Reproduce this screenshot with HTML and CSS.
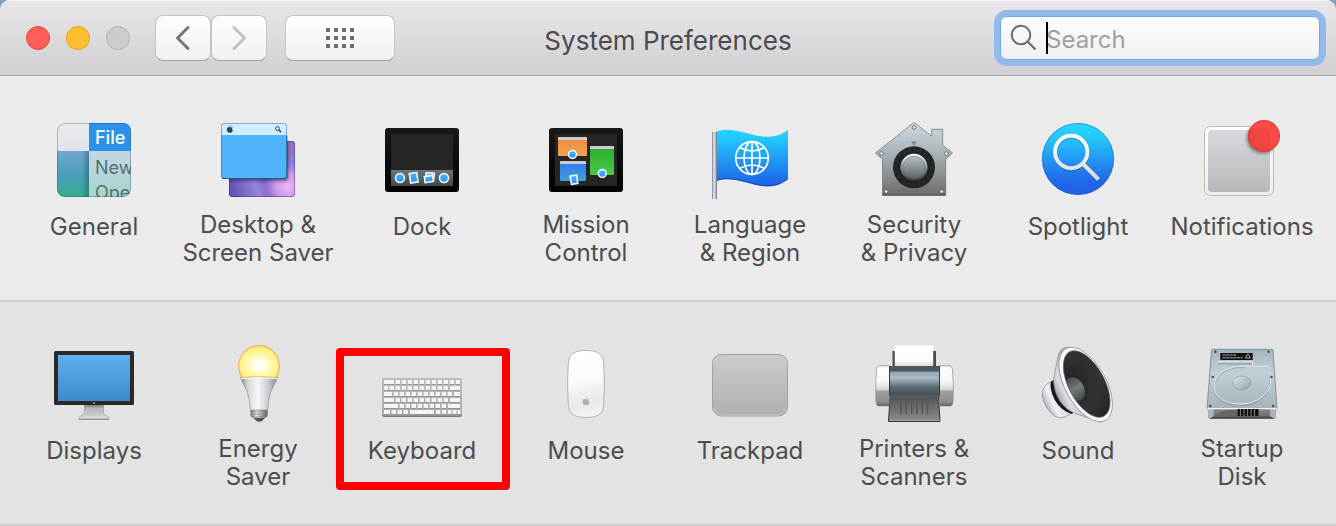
FILE: index.html
```html
<!DOCTYPE html>
<html lang="en">
<head>
<meta charset="utf-8">
<meta name="viewport" content="width=device-width, initial-scale=1">
<title>System Preferences</title>
<link rel="stylesheet" href="styles.css">
</head>
<body>
<div class="window">
  <header class="toolbar">
    <div class="toolbar-start">
      <div class="lights">
        <button class="light light-close" type="button" aria-label="Close"></button>
        <button class="light light-minimize" type="button" aria-label="Minimize"></button>
        <button class="light light-zoom" type="button" aria-label="Zoom" disabled></button>
      </div>
      <nav class="history" aria-label="History">
        <button class="tool" type="button" aria-label="Back">
          <svg width="16" height="26" viewBox="0 0 16 26" fill="none" stroke="#767676" stroke-width="3" stroke-linecap="round" stroke-linejoin="round"><path d="M13 2.500L2.500 13L13 23.500"/></svg>
        </button>
        <button class="tool" type="button" aria-label="Forward" disabled>
          <svg width="16" height="26" viewBox="0 0 16 26" fill="none" stroke="#c0c0c0" stroke-width="3" stroke-linecap="round" stroke-linejoin="round"><path d="M3 2.500L13.500 13L3 23.500"/></svg>
        </button>
      </nav>
      <button class="tool tool-wide" type="button" aria-label="Show All">
        <svg width="28" height="20" viewBox="0 0 28 20" stroke="#6e6e6e" stroke-width="4" stroke-dasharray="4 4"><path d="M0 2h28M0 10h28M0 18h28"/></svg>
      </button>
    </div>
    <h1 class="title">System Preferences</h1>
    <div class="toolbar-end">
      <div class="search">
        <svg class="search-icon" width="28" height="28" viewBox="0 0 28 28" fill="none" stroke="#6c6c6c" stroke-width="2"><circle cx="11" cy="11" r="9.300"/><path d="M17.500 17.500L25.500 25.500" stroke-width="2.300"/></svg>
        <input class="search-input" type="search" placeholder="Search" aria-label="Search">
        <span class="caret"></span>
      </div>
    </div>
  </header>

  <main>
    <section class="panes panes-personal" aria-label="Personal">
      <a class="pane" href="#general">
        <svg class="icon" viewBox="0 0 80 80" aria-hidden="true">
          <defs>
            <clipPath id="gen-clip"><rect x="3" y="3" width="74" height="74" rx="8"/></clipPath>
            <linearGradient id="gen-side" x2="0" y2="1"><stop stop-color="#74a7d0"/><stop offset=".5" stop-color="#4c9eb9"/><stop offset="1" stop-color="#34ac8d"/></linearGradient>
            <linearGradient id="gen-menu" x2="0" y2="1"><stop stop-color="#c4d5e6"/><stop offset="1" stop-color="#a5d5c8"/></linearGradient>
            <linearGradient id="gen-top" x2="0" y2="1"><stop stop-color="#ebebeb"/><stop offset="1" stop-color="#dfe3e8"/></linearGradient>
            <linearGradient id="gen-shade"><stop stop-color="#1b4d60" stop-opacity="0"/><stop offset="1" stop-color="#1b4d60" stop-opacity=".45"/></linearGradient>
          </defs>
          <g clip-path="url(#gen-clip)">
            <rect x="3" y="3" width="32" height="28" fill="url(#gen-top)"/>
            <rect x="3" y="31" width="32" height="46" fill="url(#gen-side)"/>
            <rect x="28" y="31" width="7" height="46" fill="url(#gen-shade)"/>
            <rect x="35" y="31" width="42" height="46" fill="url(#gen-menu)"/>
            <rect x="35" y="3" width="42" height="28" fill="#2b92ea"/>
            <text class="icon-text icon-text-bold" x="41" y="24" fill="#fff">File</text>
            <text class="icon-text" x="41" y="54" fill="#55706f">New</text>
            <text class="icon-text" x="41" y="79" fill="#55706f">Ope</text>
          </g>
          <rect x="3.500" y="3.500" width="73" height="73" rx="7.500" fill="none" stroke="#244b55" stroke-opacity=".32"/>
        </svg>
        <span class="label label-single">General</span>
      </a>

      <a class="pane" href="#desktop">
        <svg class="icon" viewBox="0 0 80 80" aria-hidden="true">
          <defs>
            <linearGradient id="desk-back" x1="0" y1=".7" x2="1" y2=".4"><stop stop-color="#6b51b5"/><stop offset=".35" stop-color="#8f88d8"/><stop offset=".5" stop-color="#8963cb"/><stop offset="1" stop-color="#8f7fdc"/></linearGradient>
            <radialGradient id="desk-glow"><stop stop-color="#f0b5f4"/><stop offset=".5" stop-color="#dda5ee" stop-opacity=".8"/><stop offset="1" stop-color="#a98be8" stop-opacity="0"/></radialGradient>
            <clipPath id="desk-clip"><rect x="11" y="21" width="66" height="56" rx="3"/></clipPath>
            <filter id="soft" x="-20%" y="-20%" width="140%" height="140%"><feGaussianBlur stdDeviation="1.500"/></filter>
          </defs>
          <g clip-path="url(#desk-clip)">
            <rect x="11" y="21" width="66" height="56" fill="url(#desk-back)"/>
            <circle cx="70" cy="66" r="25" fill="url(#desk-glow)"/>
            <path d="M69 21v20l8-9V21z" fill="#9a72b4" filter="url(#soft)"/>
            <rect x="5" y="6" width="65" height="55" rx="3" fill="#2c1c66" opacity=".6" filter="url(#soft)"/>
          </g>
          <rect x="11.500" y="21.500" width="65" height="55" rx="3" fill="none" stroke="#3e2870" stroke-opacity=".45"/>
          <rect x="3" y="3" width="66" height="56" rx="3" fill="#50b4fb"/>
          <path d="M3 15V6q0-3 3-3h60q3 0 3 3v9z" fill="#d2edfe"/>
          <rect x="3.500" y="3.500" width="65" height="55" rx="3" fill="none" stroke="#205d8e" stroke-opacity=".45"/>
          <path d="M4 58.500h63q2 0 2-2V16" fill="none" stroke="#173f68" stroke-opacity=".65"/>
          <path d="M13.300 7.600q-2.500-1.300-4.300.3-1 2.200.8 4.300 1 .8 2.100.2 1.200.7 2.200-.3l.9-1.600q-2-1.300-.1-2.700-.7-.8-1.600-.2zM11.200 6.900q.1-1.500 1.600-1.900 0 1.500-1.600 1.900z" fill="#28445c"/>
          <circle cx="59.500" cy="8.500" r="1.900" fill="none" stroke="#28445c"/><path d="M60.900 10l2.200 2.200" stroke="#28445c" stroke-width="1.400"/>
        </svg>
        <span class="label">Desktop &amp;<br>Screen Saver</span>
      </a>

      <a class="pane" href="#dock">
        <svg class="icon" viewBox="0 0 80 80" aria-hidden="true">
          <defs>
            <linearGradient id="frame" x2="0" y2="1"><stop stop-color="#191919"/><stop offset="1" stop-color="#000"/></linearGradient>
            <linearGradient id="dock-bar" x2="0" y2="1"><stop stop-color="#6c7577"/><stop offset="1" stop-color="#434747"/></linearGradient>
            <linearGradient id="dot" x2="0" y2="1"><stop stop-color="#4cb5fb"/><stop offset="1" stop-color="#2593f4"/></linearGradient>
          </defs>
          <rect x="3" y="8" width="74" height="64" rx="3" fill="url(#frame)"/>
          <rect x="9" y="14" width="62" height="52" fill="#252525"/>
          <rect x="9" y="50" width="62" height="16" fill="url(#dock-bar)"/>
          <g fill="url(#dot)" stroke="#fff" stroke-width="1.500">
            <circle cx="18" cy="58" r="4.500"/>
            <rect x="28" y="53" width="7.500" height="9.500" transform="rotate(-9 32 58)"/>
            <rect x="44" y="53" width="8" height="6" transform="rotate(4 48 56)"/>
            <rect x="42.500" y="56" width="8.500" height="6" transform="rotate(-8 47 58)"/>
            <circle cx="62" cy="58" r="4.500"/>
          </g>
        </svg>
        <span class="label label-single">Dock</span>
      </a>

      <a class="pane" href="#mission-control">
        <svg class="icon" viewBox="0 0 80 80" aria-hidden="true">
          <defs>
            <linearGradient id="mc-orange" x2="0" y2="1"><stop stop-color="#ec8843"/><stop offset="1" stop-color="#f2a34f"/></linearGradient>
            <linearGradient id="mc-green" x2="0" y2="1"><stop stop-color="#28ad2c"/><stop offset="1" stop-color="#47c848"/></linearGradient>
            <linearGradient id="mc-blue" x2="0" y2="1"><stop stop-color="#3179ed"/><stop offset="1" stop-color="#3ca2dc"/></linearGradient>
          </defs>
          <rect x="3" y="8" width="74" height="64" rx="3" fill="url(#frame)"/>
          <rect x="9" y="14" width="62" height="52" fill="#252525"/>
          <rect x="12" y="17" width="29" height="19" rx="1" fill="url(#mc-orange)"/>
          <rect x="44" y="26" width="24" height="29" rx="1" fill="url(#mc-green)"/>
          <rect x="14" y="41" width="26" height="20" rx="1" fill="url(#mc-blue)"/>
          <path d="M12 20v-2q0-1 1-1h27q1 0 1 1v2zM44 29v-2q0-1 1-1h22q1 0 1 1v2zM14 44v-2q0-1 1-1h24q1 0 1 1v2z" fill="#ccc"/>
          <g fill="url(#dot)" stroke="#fff" stroke-width="1.500">
            <circle cx="26.500" cy="34.500" r="4"/>
            <circle cx="56.300" cy="53.500" r="4"/>
            <rect x="24.800" y="55.500" width="6.500" height="8.500" transform="rotate(-9 28 60)"/>
          </g>
        </svg>
        <span class="label">Mission<br>Control</span>
      </a>

      <a class="pane" href="#language">
        <svg class="icon" viewBox="0 0 80 80" aria-hidden="true">
          <defs>
            <linearGradient id="flag" x2="0" y2="1"><stop stop-color="#29d6fe"/><stop offset=".25" stop-color="#21bdfa"/><stop offset="1" stop-color="#1d5fe9"/></linearGradient>
            <linearGradient id="pole"><stop stop-color="#777b96"/><stop offset=".4" stop-color="#e9ebf3"/><stop offset=".7" stop-color="#b1b4c4"/><stop offset="1" stop-color="#6f7387"/></linearGradient>
          </defs>
          <path d="M6 11.500C25 5 44 19 62 16.500C70 15.500 73 13 78 10V59C73 62 70 65 62 66C44 68.500 25 54 6 61z" fill="url(#flag)"/>
          <path d="M6 60.700C25 53.700 44 68 62 65.500C70 64.500 73 62 78 59" fill="none" stroke="#1546a8"/>
          <rect x="2" y="12" width="5" height="67" fill="url(#pole)"/>
          <g fill="none" stroke="#fff" stroke-width="1.700">
            <circle cx="42" cy="38" r="16.300"/><ellipse cx="42" cy="38" rx="8" ry="16.300"/>
            <path d="M42 21.700v32.600M25.700 38h32.600M29.500 27.500Q42 34.500 54.500 27.500M29.500 48.500Q42 41.500 54.500 48.500"/>
          </g>
        </svg>
        <span class="label">Language<br>&amp; Region</span>
      </a>

      <a class="pane" href="#security">
        <svg class="icon" viewBox="0 0 80 80" aria-hidden="true">
          <defs>
            <linearGradient id="house" x2="0" y2="1"><stop stop-color="#cddbe0"/><stop offset=".4" stop-color="#aab5ba"/><stop offset=".75" stop-color="#898c8d"/><stop offset="1" stop-color="#6c6b69"/></linearGradient>
            <linearGradient id="dial-ring" x2="0" y2="1"><stop stop-color="#fff"/><stop offset=".5" stop-color="#8d9395"/><stop offset="1" stop-color="#3a3a3a"/></linearGradient>
            <linearGradient id="dial-knob" x2="0" y2="1"><stop stop-color="#b3c2c9"/><stop offset="1" stop-color="#606466"/></linearGradient>
          </defs>
          <path d="M40 2.500L57.700 16V9.300H68.700V25L78.500 33L71.700 39.500V75.500H8.500V39.500L1.500 33z" fill="url(#house)" stroke="#62686a" stroke-opacity=".65"/>
          <path d="M8.500 74.800h63" stroke="#444" stroke-opacity=".6"/>
          <path d="M37 21.500h6l-3 4.500z" fill="#7f878a"/>
          <g fill="#e8eef0" stroke="#535d62" stroke-width=".8"><circle cx="40" cy="7.500" r="1.800"/><circle cx="7.500" cy="33.500" r="1.800"/><circle cx="72.300" cy="33.500" r="1.800"/><circle cx="12.200" cy="71.500" r="1.800"/><circle cx="67.700" cy="71.500" r="1.800"/></g>
          <circle cx="40" cy="47.300" r="21" fill="#222524"/>
          <circle cx="40" cy="47.300" r="18" fill="none" stroke="#3b403e" stroke-width="3" stroke-dasharray=".5 5.154"/>
          <circle cx="40" cy="47.300" r="13.500" fill="url(#dial-ring)"/>
          <circle cx="40" cy="47.300" r="11" fill="url(#dial-knob)" stroke="#6a7073" stroke-width=".6"/>
        </svg>
        <span class="label">Security<br>&amp; Privacy</span>
      </a>

      <a class="pane" href="#spotlight">
        <svg class="icon" viewBox="0 0 80 80" aria-hidden="true">
          <defs>
            <linearGradient id="spot" x2="0" y2="1"><stop stop-color="#29d8fe"/><stop offset=".2" stop-color="#25c8fb"/><stop offset=".8" stop-color="#2068ea"/><stop offset="1" stop-color="#2160e9"/></linearGradient>
            <linearGradient id="lens" gradientUnits="userSpaceOnUse" x1="0" y1="14" x2="0" y2="60"><stop stop-color="#fff"/><stop offset="1" stop-color="#dadada"/></linearGradient>
          </defs>
          <circle cx="40" cy="39" r="36" fill="url(#spot)"/>
          <circle cx="40" cy="39" r="35.500" fill="none" stroke="#1753b5" stroke-opacity=".45"/>
          <g fill="none" stroke="#155ba9" stroke-opacity=".45" stroke-width="4.500" transform="translate(0 1)"><circle cx="33.200" cy="32" r="16.200"/><path d="M45 44L60.500 59.500"/></g>
          <g fill="none" stroke="url(#lens)" stroke-width="4"><circle cx="33.200" cy="32" r="16.200"/><path d="M45 44L60.500 59.500"/></g>
        </svg>
        <span class="label label-single">Spotlight</span>
      </a>

      <a class="pane" href="#notifications">
        <svg class="icon" viewBox="0 0 80 80" aria-hidden="true">
          <defs>
            <linearGradient id="note" x2="0" y2="1"><stop stop-color="#d7d9df"/><stop offset="1" stop-color="#b7b8ba"/></linearGradient>
            <linearGradient id="note-edge" x2="0" y2="1"><stop stop-color="#fff"/><stop offset="1" stop-color="#eeeeea"/></linearGradient>
            <clipPath id="note-clip"><rect x="3" y="7" width="68" height="68" rx="6"/></clipPath>
          </defs>
          <rect x="2.500" y="6.500" width="69" height="69" rx="6" fill="url(#note-edge)" stroke="#b3b3b0" stroke-width=".9"/>
          <rect x="6" y="10" width="62" height="62" rx="4" fill="url(#note)"/>
          <g clip-path="url(#note-clip)"><circle cx="60.500" cy="18" r="16" fill="#555" opacity=".6" filter="url(#soft)"/></g>
          <circle cx="62" cy="16" r="16" fill="#fb4c48"/>
          <path d="M46 18a8 8 0 0 1 6-10h10q6 0 6 6v17a16 16 0 0 1-22-13z" fill="#ee4340" opacity=".75"/>
          <circle cx="62" cy="16" r="15.500" fill="none" stroke="#bd2f2c" stroke-opacity=".5"/>
        </svg>
        <span class="label label-single">Notifications</span>
      </a>
    </section>

    <section class="panes panes-hardware" aria-label="Hardware">
      <a class="pane" href="#displays">
        <svg class="icon" viewBox="0 0 80 80" aria-hidden="true">
          <defs>
            <linearGradient id="screen" x2="0" y2="1"><stop stop-color="#60b0ef"/><stop offset="1" stop-color="#3e89c9"/></linearGradient>
            <linearGradient id="stand" x2="0" y2="1"><stop stop-color="#727272"/><stop offset=".3" stop-color="#bababa"/><stop offset=".7" stop-color="#c8c8c8"/><stop offset=".9" stop-color="#e0e0e0"/><stop offset="1" stop-color="#777"/></linearGradient>
          </defs>
          <path d="M30.500 60h19v8.500q0 1.500 1.500 2.200l4 2.500v2.300H25v-2.300l4-2.500q1.500-.7 1.500-2.200z" fill="url(#stand)" stroke="#888" stroke-width=".5"/>
          <rect y="7" width="80" height="54" rx="1.500" fill="#2a2a2a"/>
          <rect x="4" y="11" width="72" height="46" fill="url(#screen)"/>
          <circle cx="40" cy="59" r="1" fill="#999"/>
        </svg>
        <span class="label label-single">Displays</span>
      </a>

      <a class="pane" href="#energy">
        <svg class="icon" viewBox="0 0 80 80" aria-hidden="true">
          <defs>
            <radialGradient id="glow" cx=".5" cy=".6" r=".65"><stop stop-color="#fff"/><stop offset=".2" stop-color="#fffff0"/><stop offset=".5" stop-color="#fff9a5"/><stop offset=".85" stop-color="#ffed7e"/><stop offset="1" stop-color="#fbd35c"/></radialGradient>
            <linearGradient id="bulb"><stop stop-color="#82858d"/><stop offset=".2" stop-color="#d8dae0"/><stop offset=".48" stop-color="#f6f6f8"/><stop offset=".75" stop-color="#c9cbd3"/><stop offset="1" stop-color="#858891"/></linearGradient>
            <linearGradient id="screw"><stop stop-color="#6f7376"/><stop offset=".35" stop-color="#e2e4e5"/><stop offset=".65" stop-color="#a7adb0"/><stop offset="1" stop-color="#54585a"/></linearGradient>
          </defs>
          <path d="M22.500 33q1.500 5 4.500 10t4 12l1.500 11h17L51 55q1-7 4-12t4.500-10z" fill="url(#bulb)" stroke="#90939b" stroke-width=".7"/>
          <path d="M24.500 33.800A20.300 20.300 0 1 1 57.500 33.800Q41 32 24.500 33.800z" fill="url(#glow)" stroke="#eeb548" stroke-width="1.200"/>
          <path d="M23 34.500Q41 32.700 59 34.500" fill="none" stroke="#fff"/>
          <path d="M32.500 66h17v6l-3 2.500h-11l-3-2.500z" fill="url(#screw)"/>
          <path d="M32.500 67.500l17-1M32.500 70.500l17-1M33.500 73.300l15-1" stroke="#7c8083" stroke-width=".7"/>
          <path d="M36 74h10.500q-2 3.500-5.300 3.700Q38 77.500 36 74z" fill="#57514c"/>
        </svg>
        <span class="label">Energy<br>Saver</span>
      </a>

      <a class="pane pane-marked" href="#keyboard">
        <svg class="icon" viewBox="0 0 80 80" aria-hidden="true">
          <defs><linearGradient id="board" x2="0" y2="1"><stop stop-color="#bcbcbc"/><stop offset="1" stop-color="#a9a9a9"/></linearGradient></defs>
          <rect y="34.500" width="80" height="38.500" rx="2" fill="#7b7b7b"/>
          <rect y="34" width="80" height="37.500" rx="2" fill="url(#board)"/>
          <g fill="none" stroke="#8c8c8c" stroke-width="4" transform="translate(0 .7)">
            <path d="M2 38h10M2 44h4M2 50h8M2 56h10M2 62h14M2 68h6M68 44h10M72 50h6M68 56h10M66 62h12M28 68h24"/>
            <path stroke-dasharray="4.500 1.500" d="M13.500 38H78M7.500 44H66.500M11.500 50H70.500M13.500 56H66.500M17.500 62H64.500M9.500 68H26.500M54 68H64.500"/>
            <path stroke-dasharray="4 1" d="M66 68h3.500M70.500 68h8"/>
          </g>
          <g fill="none" stroke="#f4f4f4" stroke-width="4">
            <path d="M2 38h10M2 44h4M2 50h8M2 56h10M2 62h14M2 68h6M68 44h10M72 50h6M68 56h10M66 62h12M28 68h24"/>
            <path stroke-dasharray="4.500 1.500" d="M13.500 38H78M7.500 44H66.500M11.500 50H70.500M13.500 56H66.500M17.500 62H64.500M9.500 68H26.500M54 68H64.500"/>
            <path stroke-dasharray="4 1" d="M66 68h3.500M70.500 68h8"/>
          </g>
        </svg>
        <span class="label label-single">Keyboard</span>
      </a>

      <a class="pane" href="#mouse">
        <svg class="icon" viewBox="0 0 80 80" aria-hidden="true">
          <defs><linearGradient id="mouse" x1=".45" x2=".55" y2="1"><stop stop-color="#fff"/><stop offset=".45" stop-color="#fbfbfb"/><stop offset=".55" stop-color="#f3f3f3"/><stop offset=".8" stop-color="#e9e9e9"/><stop offset="1" stop-color="#f6f6f6"/></linearGradient></defs>
          <path d="M40 6.500C53 6.500 57 10.500 57.800 20Q59 40 57.800 60C57 69.500 53 73.500 40 73.500C27 73.500 23 69.500 22.200 60Q21 40 22.200 20C23 10.500 27 6.500 40 6.500z" fill="url(#mouse)" stroke="#b3b3b3"/>
          <path d="M41.600 55.600q-2.800-1.400-4.800.2-1.200 2.500.8 4.800 1.200 1 2.400.2 1.300.8 2.400-.3l1.100-1.900q-2.200-1.200-.2-3-.7-.7-1.700 0zM39.500 54.800q.1-1.800 1.800-2.100 0 1.700-1.800 2.100z" fill="#aeaeae"/>
        </svg>
        <span class="label label-single">Mouse</span>
      </a>

      <a class="pane" href="#trackpad">
        <svg class="icon" viewBox="0 0 80 80" aria-hidden="true">
          <defs><linearGradient id="pad" x2="0" y2="1"><stop stop-color="#cbcbcb"/><stop offset="1" stop-color="#afafaf"/></linearGradient></defs>
          <rect x="2.500" y="10.500" width="75" height="61.500" rx="9" fill="url(#pad)" stroke="#a1a1a1"/>
          <path d="M4 64q1 7 9 7h54q8 0 9-7" fill="none" stroke="#d0d0d0" stroke-width=".8"/>
        </svg>
        <span class="label label-single">Trackpad</span>
      </a>

      <a class="pane" href="#printers">
        <svg class="icon" viewBox="0 0 80 80" aria-hidden="true">
          <defs>
            <linearGradient id="paper" x2="0" y2="1"><stop stop-color="#fff"/><stop offset=".7" stop-color="#fdfdfd"/><stop offset="1" stop-color="#d5d5d5"/></linearGradient>
            <linearGradient id="roller" x2="0" y2="1"><stop stop-color="#4b565f"/><stop offset=".16" stop-color="#4d5962"/><stop offset=".2" stop-color="#93a5b3"/><stop offset=".38" stop-color="#aabbc8"/><stop offset=".68" stop-color="#5e6a73"/><stop offset=".9" stop-color="#495259"/><stop offset="1" stop-color="#566069"/></linearGradient>
            <linearGradient id="cap" x2="0" y2="1"><stop stop-color="#e9e9e9"/><stop offset=".08" stop-color="#fff"/><stop offset=".4" stop-color="#f7f7f7"/><stop offset=".6" stop-color="#d2d2d2"/><stop offset=".63" stop-color="#9f9f9f"/><stop offset=".9" stop-color="#8c8c8c"/><stop offset="1" stop-color="#626262"/></linearGradient>
            <linearGradient id="tray" x2="0" y2="1"><stop stop-color="#535353"/><stop offset="1" stop-color="#8c8c8c"/></linearGradient>
          </defs>
          <path d="M18.500 7h3v16h-3zM59 7h3v16h-3z" fill="#4c4c4c"/>
          <path d="M20.800 1.500h38.400V23H20.800z" fill="url(#paper)"/>
          <path d="M16 52h48.500l1.500 25.500H14.500z" fill="url(#tray)" stroke="#373737"/>
          <path d="M27 55v15M32.300 55v15M37.600 55v15M42.900 55v15M48.200 55v15M53.500 55v15" stroke="#555" stroke-width="1.500"/>
          <path d="M15.500 76.500h50" stroke="#a0a0a0"/>
          <rect x="15" y="22" width="51" height="31" fill="url(#roller)"/>
          <path d="M5 21.700h10.500V53l-.5 9H4.500Q2.500 62 2 58Q1 42 2.500 26Q3 21.700 5 21.700zM65.500 21.700H76Q78 21.700 78.500 26Q80 42 79 58Q78.500 62 76.500 62H66l-.5-9z" fill="url(#cap)" stroke="#808080" stroke-width=".6"/>
          <path d="M15.500 22v30M65.500 22v30" stroke="#343b40"/>
        </svg>
        <span class="label">Printers &amp;<br>Scanners</span>
      </a>

      <a class="pane" href="#sound">
        <svg class="icon" viewBox="0 0 80 80" aria-hidden="true">
          <defs>
            <linearGradient id="magnet" x1="0" y1=".8" x2="1" y2=".2"><stop stop-color="#8b8b94"/><stop offset=".35" stop-color="#ededf3"/><stop offset=".7" stop-color="#d8d8e2"/><stop offset="1" stop-color="#a0a0ab"/></linearGradient>
            <linearGradient id="horn" x1=".1" y1=".9" x2=".8" y2=".4"><stop stop-color="#70707a"/><stop offset=".3" stop-color="#dddde6"/><stop offset=".65" stop-color="#a9a9b6"/><stop offset="1" stop-color="#eee"/></linearGradient>
            <radialGradient id="cone" cx=".4" cy=".5" r=".65"><stop stop-color="#202224"/><stop offset=".6" stop-color="#313335"/><stop offset="1" stop-color="#1e2021"/></radialGradient>
            <linearGradient id="dome"><stop stop-color="#454a4c"/><stop offset=".5" stop-color="#747b7d"/><stop offset="1" stop-color="#45494b"/></linearGradient>
            <clipPath id="cone-clip"><ellipse rx="36.500" ry="18" transform="translate(48.700 40) rotate(62)"/></clipPath>
          </defs>
          <path d="M14 37.500Q4.500 40 4.300 51Q6 64 16.500 72Q21 75 27 73L34 69L22 40z" fill="url(#magnet)" stroke="#777781" stroke-width=".6"/>
          <path d="M13 37.500Q11 44 16.500 55.500Q23 67 34 70L38 66L18 35z" fill="#151617"/>
          <path d="M21 9Q16 30 15.500 38Q16 48 22 57.500Q29 66.500 36 69L62 78L66 76L32 3Q24 3 21 9z" fill="url(#horn)" stroke="#77777f" stroke-width=".6"/>
          <ellipse rx="41" ry="20.500" transform="translate(47.700 40.500) rotate(61)" fill="#fafafc" stroke="#8b8b92" stroke-width=".7"/>
          <g clip-path="url(#cone-clip)">
            <rect width="80" height="80" fill="url(#cone)"/>
            <ellipse rx="12.500" ry="9" transform="translate(37 45) rotate(62)" fill="url(#dome)"/>
          </g>
          <ellipse rx="36.500" ry="18" transform="translate(48.700 40) rotate(62)" fill="none" stroke="#606166" stroke-width=".7"/>
        </svg>
        <span class="label label-single">Sound</span>
      </a>

      <a class="pane" href="#startup-disk">
        <svg class="icon" viewBox="0 0 80 80" aria-hidden="true">
          <defs>
            <linearGradient id="plate" x2="0" y2="1"><stop stop-color="#a4b4bb"/><stop offset=".4" stop-color="#c2d0d5"/><stop offset="1" stop-color="#a6b2b7"/></linearGradient>
            <linearGradient id="front" x2="0" y2="1"><stop stop-color="#8b8d8c"/><stop offset=".7" stop-color="#717271"/><stop offset="1" stop-color="#333"/></linearGradient>
            <linearGradient id="hub" x2="1" y2="1"><stop stop-color="#dce6e9"/><stop offset="1" stop-color="#93a1a8"/></linearGradient>
          </defs>
          <path d="M5.500 64h69l-1 9q-.2 1.700-2 1.700h-63q-1.800 0-2-1.700z" fill="url(#front)"/>
          <path d="M5.800 65h6v7l-3 2h-2.300zM68 65h6.200l-.8 9H71l-3-2z" fill="#aeb5b8"/>
          <path d="M14 73q2-6 13-7h8v6z" fill="#666665"/>
          <path d="M10.500 5.300h59.500q.8 0 1 1L75 64.500H5L9.500 6.300q.2-1 1-1z" fill="url(#plate)" stroke="#76858c" stroke-width=".8"/>
          <path d="M5.300 64.700h69.400" stroke="#eff3f4" stroke-width="1.200"/>
          <rect x="35.500" y="65" width="21" height="7" fill="#111"/>
          <path d="M38.500 65v7M42 65v7M45.500 65v7M49 65v7M52.500 65v7" stroke="#737373" stroke-width="1.200"/>
          <path d="M16 18.800H50M68 24V38Q68 47 60 53Q51 60.500 38 60.500Q24 60 16.500 53Q11 47 12.500 39Q14 31 23 26Q32 21.500 43 22.200" fill="none" stroke="#728188" stroke-opacity=".5" stroke-width="1.200" transform="translate(0 1)"/>
          <path d="M15.500 17.700H50.500V22.200H65Q67.500 22.200 67.700 24.500L68.500 38Q68.500 47 60 53Q51 60 38 60Q24 60 16.500 53Q11 47 12.500 39Q14 31 23 26Q32 21.500 43 22.200H50" fill="none" stroke="#e2ebee" stroke-width="1"/>
          <ellipse cx="39.800" cy="39" rx="9" ry="7" fill="url(#hub)" stroke="#8b999f" stroke-width=".7"/>
          <rect x="18.300" y="9" width="32.400" height="7" fill="#111"/>
          <path d="M20.500 11h14M20.500 13.800h20" stroke="#b6b6b6" stroke-width="1" stroke-dasharray="3 .6"/>
          <path d="M43.500 14l2.500-4 2.500 4z" fill="none" stroke="#ccc" stroke-width=".8"/>
          <g fill="#34525f"><circle cx="13.300" cy="7.700" r="1.200"/><circle cx="66.500" cy="7.700" r="1.200"/><circle cx="10.800" cy="33" r="1.200"/><circle cx="69.500" cy="33" r="1.200"/><circle cx="8.300" cy="62" r="1.200"/><circle cx="71.200" cy="62" r="1.200"/></g>
        </svg>
        <span class="label">Startup<br>Disk</span>
      </a>
    </section>
  </main>
</div>
</body>
</html>
```
FILE: styles.css
```css
*,
*::after {
  box-sizing: border-box;
}

body {
  margin: 0;
  background: #7f9fc4;
  color: #4d4d4d;
  font-family: Inter, "Liberation Sans", sans-serif;
  font-size: 24px;
}

.window {
  min-height: 100vh;
  overflow: hidden;
  border-radius: 10px 10px 0 0;
  background: #ebebeb;
}

.toolbar {
  display: grid;
  grid-template-columns: 1fr auto 1fr;
  align-items: center;
  height: 76px;
  padding: 0 16px;
  border-bottom: 1px solid #a9a7a9;
  background: linear-gradient(#e9e7ea, #d0ced1);
  box-shadow: inset 0 1px #f6f5f6;
}

.toolbar-start,
.lights,
.history {
  display: flex;
  align-items: center;
}

.toolbar-start {
  padding-left: 10px;
}

.lights {
  gap: 16px;
  margin-right: 25px;
}

.light {
  width: 24px;
  height: 24px;
  padding: 0;
  border: 1px solid;
  border-radius: 50%;
}

.light-close {
  border-color: #e2443f;
  background: #ff5f58;
}

.light-minimize {
  border-color: #dfa023;
  background: #ffbf2f;
}

.light-zoom {
  border-color: #b1afb1;
  background: #cdcccd;
}

.history {
  margin-right: 18px;
}

.tool {
  display: grid;
  place-items: center;
  width: 56px;
  height: 46px;
  padding: 0;
  border: 1px solid #c4c2c4;
  border-bottom-color: #a3a1a3;
  border-radius: 8px;
  background: linear-gradient(#fefefe, #f0f0f0);
}

.tool-wide {
  width: 110px;
}

.title {
  margin: 0;
  padding-top: 6px;
  color: #4b4a4c;
  font-size: 26px;
  font-weight: 400;
  line-height: 32px;
}

.toolbar-end {
  display: flex;
  justify-content: flex-end;
}

.search {
  position: relative;
  display: flex;
  align-items: center;
  width: 320px;
  height: 44px;
  padding-left: 9px;
  border: 1px solid #71a9e5;
  border-radius: 7px;
  background: linear-gradient(#fcfcfc, #f0f0f0);
  box-shadow: 0 0 0 6px #92bbec;
}

.search-icon {
  flex: none;
}

.search-input {
  flex: 1;
  min-width: 0;
  padding: 4px 8px 0;
  border: 0;
  outline: 0;
  background: none;
  color: #333;
  font: inherit;
}

.search-input::placeholder {
  color: #a0a0a0;
  opacity: 1;
}

.caret {
  position: absolute;
  top: 5px;
  left: 45px;
  width: 2px;
  height: 32px;
  background: #000;
}

.panes {
  display: grid;
  grid-template-columns: repeat(8, 1fr);
  padding: 44px 12px 33px;
}

.panes-personal {
  background: #ebebeb;
}

.panes-hardware {
  padding-top: 42px;
  border-top: 2px solid #cecece;
  border-bottom: 2px solid #cecece;
  background: #e3e3e3;
}

.pane {
  position: relative;
  display: flex;
  flex-direction: column;
  align-items: center;
  color: inherit;
  text-align: center;
  text-decoration: none;
}

.icon {
  width: 80px;
  height: 80px;
  margin-bottom: 11px;
}

.icon-text {
  font-size: 18px;
}

.icon-text-bold {
  font-weight: 500;
}

.label {
  line-height: 28px;
  white-space: nowrap;
}

.label-single {
  line-height: 32px;
}

.pane-marked::after {
  content: "";
  position: absolute;
  top: 4px;
  right: -6px;
  left: -4px;
  height: 142px;
  border: 8px solid #f00;
  border-radius: 4px;
}
```
